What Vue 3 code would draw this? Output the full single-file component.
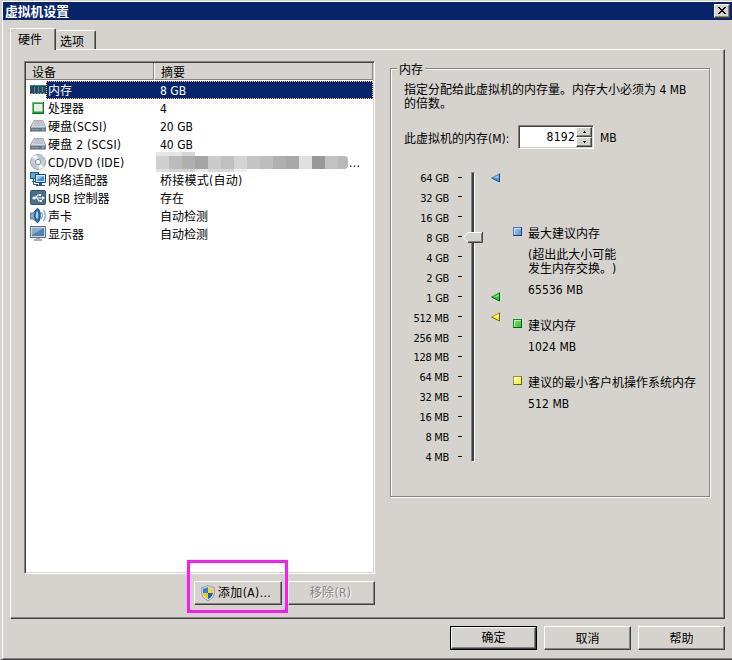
<script setup>
const devices = [
  { icon: 'memory', name: '内存', summary: '8 GB', selected: true },
  { icon: 'cpu', name: '处理器', summary: '4' },
  { icon: 'disk', name: '硬盘(SCSI)', summary: '20 GB' },
  { icon: 'disk', name: '硬盘 2 (SCSI)', summary: '40 GB' },
  { icon: 'cd', name: 'CD/DVD (IDE)', masked: true },
  { icon: 'net', name: '网络适配器', summary: '桥接模式(自动)' },
  { icon: 'usb', name: 'USB 控制器', summary: '存在' },
  { icon: 'sound', name: '声卡', summary: '自动检测' },
  { icon: 'display', name: '显示器', summary: '自动检测' }
]
const mosaic = ['#cfcfcf', '#bbbbbb', '#afafaf', '#a5a5a5', '#cacaca', '#c0c0c0', '#d4d4d4', '#c4c4c4', '#bdbdbd', '#b0b0b0', '#a9a9a9', '#e0e0e0', '#999999', '#c2c2c2', '#b9b9b9']
const scale = ['64 GB', '32 GB', '16 GB', '8 GB', '4 GB', '2 GB', '1 GB', '512 MB', '256 MB', '128 MB', '64 MB', '32 MB', '16 MB', '8 MB', '4 MB']
const isWide = (s) => Boolean(s) && s.includes('(')
</script>

<template>
  <div class="window">
    <header class="titlebar">
      <span class="title">虚拟机设置</span>
      <button class="close">
        <svg width="8" height="7" viewBox="0 0 8 7" shape-rendering="crispEdges"><path d="M0 0h2v1h1v1h2V1h1V0h2v1H7v1H6v1H5v1h1v1h1v1h1v1H6V6H5V5H3v1H2v1H0V6h1V5h1V4h1V3H2V2H1V1H0z" /></svg>
      </button>
    </header>

    <nav class="tabs">
      <div class="tab active">硬件</div>
      <div class="tab second">选项</div>
    </nav>

    <main class="panel">
      <section class="left">
        <div class="list">
          <div class="list-head">
            <span class="col-device">设备</span>
            <span class="col-summary">摘要</span>
          </div>
          <div v-for="d in devices" :key="d.name" class="row" :class="{ selected: d.selected }">
            <svg class="icon" width="16" height="18" viewBox="0 0 16 18">
              <g v-if="d.icon === 'memory'" shape-rendering="crispEdges">
                <path d="M0 4h16v9H0z" fill="#1e5650" /><path d="M0 4h16v1H0z" fill="#397d76" />
                <path d="M1 6h3v5H1zM5 6h3v5H5zM9 6h3v5H9zM13 6h2v5h-2z" fill="#304668" />
                <path d="M4 6h1v5H4zM8 6h1v5H8zM12 6h1v5h-1z" fill="#4c9186" />
                <path d="M1 12h2v1H1zM4 12h2v1H4zM7 12h2v1H7zM10 12h2v1h-2zM13 12h2v1h-2z" fill="#8da28a" />
              </g>
              <g v-else-if="d.icon === 'cpu'">
                <path d="M2 3h12v12H2z" fill="#239c3c" /><path d="M2.500 14V3.500H13" fill="none" stroke="#69c978" />
                <path d="M13.500 3v11.500H2" fill="none" stroke="#087a24" />
                <path d="M4 5h8v8H4z" fill="#e9ece9" /><path d="M4 12.500h8.500V5" fill="none" stroke="#9db79f" />
              </g>
              <g v-else-if="d.icon === 'disk'">
                <path d="M4 3h9l3 7v5H0v-5z" fill="#7f8995" /><path d="M4.400 3.500h8.200l2.700 6.600H.9z" fill="#d3d8df" />
                <path d="M5 4h7l2 5H3z" fill="#bcc3ce" /><path d="M1 10.500h14V14H1z" fill="#657482" />
                <path d="M1 10.500h14M1 14.500h15" stroke="#a6afb7" /><path d="M2 12h7v1H2z" fill="#8999a5" /><path d="M12 11.500h2v2h-2z" fill="#63c7bb" />
              </g>
              <g v-else-if="d.icon === 'cd'">
                <circle cx="8" cy="9" r="7.500" fill="#c9d0da" stroke="#98a4b1" />
                <path d="M8 9 2 4a7 7 0 0 1 5-2zM8 9l6 5a7 7 0 0 1-5 2z" fill="#f0f4f6" />
                <path d="M8 9 15 7a7 7 0 0 0-4-5zM8 9l-7 2a7 7 0 0 0 4 4z" fill="#b9c4d0" />
                <circle cx="8" cy="9" r="2.700" fill="#e8edf0" stroke="#8797a7" /><circle cx="8" cy="9" r="1" fill="#fff" />
              </g>
              <g v-else-if="d.icon === 'net'">
                <path d="M0 1h9v7H0z" fill="#205f91" /><path d="M1 2h7v5H1z" fill="#61a9d5" />
                <path d="M3.500 8v5.500H8M2 10.500h4" fill="none" stroke="#235f8a" />
                <path d="M5.500 3.500h10v8h-10z" fill="#d3e7f7" stroke="#174678" /><path d="M7 5h7v5H7z" fill="#468bd4" /><path d="M7 5h7l-7 4z" fill="#91caf4" />
                <path d="M9 12h3v2h3v1H6v-1h3z" fill="#315779" />
              </g>
              <g v-else-if="d.icon === 'usb'">
                <rect x=".5" y="1.500" width="15" height="14" rx="1" fill="#49718f" stroke="#36536d" />
                <path d="M3 9h10M5 9l3-3h2M7 9l2 3h2" fill="none" stroke="#fff" stroke-width="1.200" />
                <circle cx="4" cy="9" r="1.600" fill="#fff" /><path d="m12 7 3 2-3 2zM9 5h2v2H9zM10 11h2v2h-2z" fill="#fff" />
              </g>
              <g v-else-if="d.icon === 'sound'">
                <path d="M0 6h3l5-4.500v14L3 12H0z" fill="#91a4b5" stroke="#4b6f8d" stroke-width=".8" />
                <ellipse cx="7.500" cy="8.500" rx="2.800" ry="6.800" fill="#2874af" stroke="#174e82" /><ellipse cx="7" cy="8.300" rx="1.100" ry="3.800" fill="#a9d8ef" />
                <path d="M11.500 5q2 3.500 0 7M13.500 3q3.500 5.500 0 11" fill="none" stroke="#5289b7" />
              </g>
              <g v-else>
                <path d="M.5 1.500h15v11H.5z" fill="#d1d9df" stroke="#536e87" /><path d="M2 3h12v8H2z" fill="#5683ad" />
                <path d="M2 3h12L2 10z" fill="#86acd0" /><path d="M6 13h4v1h2v2H4v-2h2z" fill="#a4b0bc" />
              </g>
            </svg>
            <div class="row-body">
              <span class="name" :class="{ wide: isWide(d.name) }">{{ d.name }}</span>
              <span v-if="!d.masked" class="summary" :class="{ wide: isWide(d.summary) }">{{ d.summary }}</span>
              <span v-else class="mask">
                <span class="mask-top"></span>
                <span class="blocks"><i v-for="c in mosaic" :key="c" :style="{ background: c }"></i></span>
                <span class="mask-bottom"></span>
                <span class="more">...</span>
              </span>
            </div>
          </div>
        </div>
        <div class="list-actions">
          <div class="highlight">
            <button class="btn add">
              <svg width="14" height="16" viewBox="0 0 14 16">
                <path d="M7 .5C5 2 3 2.300.8 2.300v6Q1 13 7 15.600 13 13 13.200 8.300v-6C11 2.300 9 2 7 .5z" fill="#dce5ec" stroke="#8c9aa5" />
                <path d="M7 2v6H2V3.500Q5 3.500 7 2z" fill="#2f82d2" /><path d="M7 2v6h5V3.500Q9 3.500 7 2z" fill="#fbd434" />
                <path d="M7 8v6Q2.500 12 2 8z" fill="#f8c61c" /><path d="M7 8v6q4.500-2 5-6z" fill="#1c63b5" />
              </svg>
              <span>添加(A)...</span>
            </button>
          </div>
          <button class="btn remove" disabled>移除(R)</button>
        </div>
      </section>

      <fieldset class="group">
        <legend>内存</legend>
        <p class="intro">指定分配给此虚拟机的内存量。内存大小必须为 4 MB<br />的倍数。</p>
        <div class="amount">
          <span class="amount-label">此虚拟机的内存(M):</span>
          <div class="spin">
            <span class="value">8192</span>
            <span class="spinners">
              <i><svg width="3" height="2"><path d="M1 0h1v1h1v1H0V1h1z" /></svg></i>
              <i><svg width="3" height="2"><path d="M0 0h3v1H2v1H1V1H0z" /></svg></i>
            </span>
          </div>
          <span class="unit">MB</span>
        </div>
        <div class="memory">
          <div class="scale">
            <div v-for="s in scale" :key="s" class="tick"><span>{{ s }}</span><i></i></div>
          </div>
          <div class="track">
            <svg class="thumb" width="20" height="11" viewBox="0 0 20 11">
              <path d="M0 5.500 5 0h15v11H5z" fill="#d6d3ce" /><path d="M5 10.500h14.500V0" fill="none" stroke="#424142" />
              <path d="M5 9.500h13.500V1" fill="none" stroke="#848284" /><path d="M5 10 .5 5.500 5 .5h14" fill="none" stroke="#fff" />
            </svg>
          </div>
          <div class="markers">
            <svg v-for="m in ['blue', 'green', 'yellow']" :key="m" :class="['marker', m]" width="10" height="10" viewBox="0 0 10 10">
              <path class="fill" d="M.8 5 8.500 1v8z" /><path class="shine" d="M3 5 7.500 2.500v2z" /><path class="line" d="M9 .5.6 5" /><path class="shade" d="M.6 5 8.500 9V.8" />
            </svg>
          </div>
          <div class="legend">
            <div class="entry first">
              <i class="swatch blue"></i>
              <div><p>最大建议内存</p><p class="note">(超出此大小可能<br />发生内存交换。)</p><p class="number">65536 MB</p></div>
            </div>
            <div class="entry second">
              <i class="swatch green"></i>
              <div><p>建议内存</p><p class="number">1024 MB</p></div>
            </div>
            <div class="entry third">
              <i class="swatch yellow"></i>
              <div><p>建议的最小客户机操作系统内存</p><p class="number">512 MB</p></div>
            </div>
          </div>
        </div>
      </fieldset>
    </main>

    <footer class="footer">
      <button class="btn default"><span>确定</span></button>
      <button class="btn">取消</button>
      <button class="btn">帮助</button>
    </footer>
  </div>
</template>

<style>
body { margin: 0; overflow: hidden; background: #d6d3ce; }
</style>

<style scoped>
* { box-sizing: border-box; }
p { margin: 0; }
button { font: inherit; color: inherit; padding: 0; border-radius: 0; }
.window {
  width: 732px; height: 660px; background: #d6d3ce; color: #000;
  border: solid; border-width: 1px 0 1px 2px; border-color: #d6d3ce #d6d3ce #424142;
  box-shadow: inset 1px 1px #fff, inset 0 -1px #848284;
  font: 12px/14px "DejaVu Sans Condensed", "Noto Sans CJK SC", sans-serif;
  text-spacing-trim: space-all;
  display: flex; flex-direction: column; white-space: nowrap;
}
.titlebar {
  height: 18px; margin: 1px 0 0 1px; padding: 0 2px 0 2px; background: #08246b; color: #fff;
  display: flex; align-items: center; justify-content: space-between; flex: none;
}
.title { font-weight: bold; font-size: 12.800px; line-height: 18px; padding-top: 1px; }
.close {
  width: 16px; height: 14px; background: #d6d3ce; border: 1px solid; border-color: #fff #424142 #424142 #fff;
  box-shadow: inset -1px -1px #848284; display: flex; align-items: center; justify-content: center;
  padding: 0 1px 1px 0;
}
.tabs { height: 29px; margin-left: 8px; display: flex; align-items: flex-end; flex: none; }
.tab {
  height: 19px; width: 40px; border: solid; border-width: 1px 1px 0 0; border-color: #fff #424142;
  box-shadow: inset -1px 0 #848284; border-radius: 2px 2px 0 0; line-height: 23px; padding-left: 4px;
}
.tab.active {
  width: 46px; height: 22px; border-left: 1px solid #fff; line-height: 23px; padding-left: 7px;
  margin-bottom: -1px; background: #d6d3ce; z-index: 1;
}
.panel {
  width: 715px; height: 570px; margin-left: 8px; flex: none; border: 1px solid; border-color: #fff #424142 #424142 #fff;
  box-shadow: inset -1px -1px #848284; display: flex; padding: 11px 13px 0 13px; gap: 15px;
}
.left { width: 351px; }
.list {
  height: 513px; background: #fff; border: 1px solid; border-color: #848284 #fff #fff #848284;
  box-shadow: inset 1px 1px #424142, inset -1px -1px #d6d3ce; padding: 1px;
}
.list-head {
  height: 18px; display: flex; background: #d6d3ce; border-bottom: 1px solid #fff; overflow: hidden;
  line-height: 21px;
}
.list-head span { border-right: 1px solid #848284; border-bottom: 1px solid #848284; height: 17px; }
.col-device { width: 128px; padding-left: 6px; }
.col-summary { flex: 1; border-left: 1px solid #fff; padding-left: 6px; }
.row { height: 18px; display: flex; padding-left: 4px; }
.icon { flex: none; }
.row-body { flex: 1; height: 18px; display: grid; grid-template-columns: 113px 1fr; line-height: 20px; padding-left: 1px; }
.name { padding-left: 1px; }
.wide { letter-spacing: .25px; }
.selected .row-body { background: #08246b; color: #fff; border: 1px dotted #ffcb73; padding-left: 0; line-height: 18px; }
.mask { display: grid; grid-template-columns: 192px 16px; grid-template-rows: 4px 13px 3px; height: 20px; margin: -1px 0 -1px -4px; }
.mask-top { background: linear-gradient(90deg, #e5e5e5 26px, #d6d6d6 0); width: 39px; grid-column: 1; }
.blocks { display: flex; overflow: hidden; border-radius: 0 4px 4px 0; grid-column: 1; grid-row: 2; }
.blocks i { width: 13px; flex: none; }
.mask-bottom { width: 91px; grid-row: 3; background: linear-gradient(90deg, #e0e0e0 13px, #d3d3d3 0 39px, #e7e7e7 0 52px, #d9d9d9 0 78px, #eee 0); }
.more { grid-column: 2; grid-row: 2; line-height: 14px; padding-left: 1px; letter-spacing: .3px; }
.list-actions { display: flex; }
.highlight { margin: -14px 0 0 163px; width: 101px; height: 53px; border: 3px solid #f71cf0; padding: 18px 3px 0 4px; flex: none; }
.btn {
  width: 87px; height: 24px; background: #d6d3ce; border: 1px solid; border-color: #fff #424142 #424142 #fff;
  box-shadow: inset -1px -1px #848284; display: flex; justify-content: center; align-items: center; line-height: 20px;
  padding-top: 1px;
}
.btn.add { width: 88px; gap: 3px; padding: 0 4px 0 0; letter-spacing: .4px; }
.btn.remove { margin-top: 7px; color: #848284; text-shadow: 1px 1px #fff; letter-spacing: .3px; padding: 0 2px 0 0; }
.group {
  margin: 0; width: 320px; height: 436px; min-width: 0; padding: 0 0 0 13px; border: 1px solid #848284;
  box-shadow: inset 1px 1px #fff, 1px 1px #fff;
}
.group legend { height: 15px; line-height: 19px; padding: 0 2px; margin-left: -7px; background: #d6d3ce; }
.intro { line-height: 14px; margin-top: 7px; }
.amount { display: flex; align-items: center; height: 24px; margin-top: 14px; }
.amount-label { width: 114px; padding-top: 3px; }
.unit { padding-top: 2px; }
.spin {
  width: 76px; height: 24px; margin-right: 6px; background: #fff; display: flex; padding: 1px; border: 1px solid;
  border-color: #848284 #fff #fff #848284; box-shadow: inset 1px 1px #424142, inset -1px -1px #d6d3ce;
}
.value { flex: 1; text-align: right; line-height: 20px; letter-spacing: .25px; padding-right: 1px; }
.spinners { width: 16px; display: grid; grid-template-rows: 10px 10px; }
.spinners i {
  background: #d6d3ce; border: 1px solid; border-color: #fff #424142 #424142 #fff; box-shadow: inset -1px -1px #848284;
  display: flex; align-items: center; justify-content: center;
}
.memory { display: grid; grid-template-columns: 58px 20px 20px 1fr; margin-top: 18px; }
.scale { font-size: 11px; letter-spacing: -.3px; }
.tick { height: 19.950px; line-height: 20px; display: grid; grid-template-columns: 45px 4px; column-gap: 9px; align-items: center; text-align: right; }
.tick span { padding-top: 2px; height: 20px; line-height: 19px; }
.tick i { height: 1px; background: #000; }
.track {
  width: 4px; height: 290px; margin: 5px 0 0 9px; background: #424142; border: 1px solid;
  border-color: #848284 #fff #fff #848284; position: relative;
}
.thumb { position: absolute; left: -9px; top: 59px; }
.markers { padding: 6px 0 0 9px; display: flex; flex-direction: column; }
.marker.green { margin-top: 109px; }
.marker.yellow { margin-top: 10px; }
.marker.blue .fill { fill: #5b92d2; } .marker.green .fill { fill: #33c138; } .marker.yellow .fill { fill: #f5ed28; }
.shine { fill: #ffffff99; }
.line, .shade { fill: none; stroke: #174a83; }
.line { stroke: #628bbb; }
.green .shade { stroke: #006509; } .green .line { stroke: #239b2c; }
.yellow .shade { stroke: #6c6700; } .yellow .line { stroke: #aaa320; }
.legend { padding: 60px 0 0 11px; }
.entry { display: grid; grid-template-columns: 10px 1fr; column-gap: 5px; }
.entry.second, .entry.third { margin-top: 22px; }
.note { margin-top: 7px; }
.number { margin-top: 7px; letter-spacing: .1px; }
.swatch { width: 9px; height: 9px; border: 1px solid; box-shadow: inset 1px 1px #ffffff88; }
.swatch.blue { background: linear-gradient(135deg, #a6c9ef, #5e94d0); border-color: #4c77aa #173f75 #173f75 #4c77aa; }
.swatch.green { background: linear-gradient(135deg, #83e476, #3db82f); border-color: #168a25 #006410 #006410 #168a25; }
.swatch.yellow { background: linear-gradient(135deg, #fffda5, #f7ef2a); border-color: #99932a #686500 #686500 #99932a; }
.footer { display: flex; margin: 7px 0 0 448px; gap: 7px; }
.footer .btn.default { border: 1px solid #000; box-shadow: none; padding: 0; }
.default span { flex: 1; height: 22px; border: 1px solid; border-color: #fff #424142 #424142 #fff; box-shadow: inset -1px -1px #848284; line-height: 21px; }
</style>
